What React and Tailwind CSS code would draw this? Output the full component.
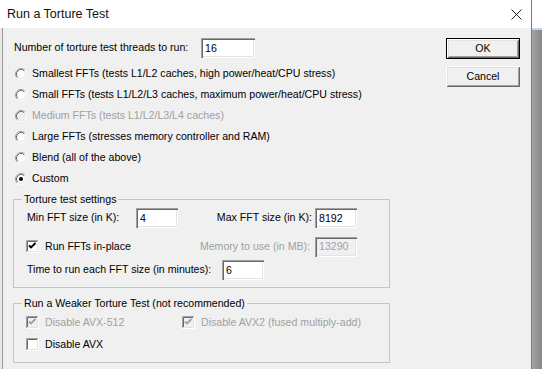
import React from 'react'

const sunken =
  'shadow-[inset_1px_1px_0_#a0a0a0,inset_2px_2px_0_#696969,inset_-1px_-1px_0_#ffffff,inset_-2px_-2px_0_#e3e3e3]'

function Radio({ checked, disabled }) {
  return (
    <svg width="12" height="12" viewBox="0 0 12 12" className="shrink-0">
      <circle cx="6" cy="6" r="5" fill={disabled ? '#f0f0f0' : '#ffffff'} />
      <path d="M2.11 9.89 A5.5 5.5 0 0 1 9.89 2.11" fill="none" stroke="#a0a0a0" />
      <path d="M9.89 2.11 A5.5 5.5 0 0 1 2.11 9.89" fill="none" stroke="#ffffff" />
      <path d="M2.82 9.18 A4.5 4.5 0 0 1 9.18 2.82" fill="none" stroke="#696969" />
      <path d="M9.18 2.82 A4.5 4.5 0 0 1 2.82 9.18" fill="none" stroke="#e3e3e3" />
      {checked && <circle cx="6" cy="6" r="2" fill="#000" />}
    </svg>
  )
}

function Check({ checked, disabled }) {
  return (
    <svg width="13" height="13" viewBox="0 0 13 13" className="shrink-0">
      <rect x="0" y="0" width="13" height="13" fill="#ffffff" />
      <rect x="2" y="2" width="9" height="9" fill={disabled ? '#f0f0f0' : '#ffffff'} />
      <path d="M0.5 12 V0.5 H12" fill="none" stroke="#a0a0a0" />
      <path d="M1.5 11 V1.5 H11" fill="none" stroke="#696969" />
      <path d="M1.5 11.5 H11.5 V1.5" fill="none" stroke="#e3e3e3" />
      {checked && (
        <path
          d="M3 5.5 L5 7.5 L9.5 3"
          fill="none"
          stroke={disabled ? '#a0a0a0' : '#000'}
          strokeWidth="1.9"
        />
      )}
    </svg>
  )
}

function Field({ value, width, disabled }) {
  return (
    <div
      className={`${width} h-[20px] shrink-0 pl-[4px] pt-[1px] flex items-center ${sunken} ${
        disabled ? 'bg-[#f0f0f0] text-[#a0a0a0]' : 'bg-white text-black'
      }`}
    >
      {value}
    </div>
  )
}

function RadioRow({ label, checked, disabled }) {
  return (
    <div className={`h-[21px] flex items-center pl-[2px] ${disabled ? 'text-[#a0a0a0]' : ''}`}>
      <Radio checked={checked} disabled={disabled} />
      <span className="ml-[5px]">{label}</span>
    </div>
  )
}

function CheckRow({ label, checked, disabled, className = '' }) {
  return (
    <div className={`flex items-center ${disabled ? 'text-[#a0a0a0]' : ''} ${className}`}>
      <Check checked={checked} disabled={disabled} />
      <span className="ml-[6px]">{label}</span>
    </div>
  )
}

function Button({ children, isDefault }) {
  return (
    <div
      className={`w-[74px] h-[21px] flex items-center justify-center bg-[#f0f0f0] ${
        isDefault
          ? 'border border-black shadow-[inset_1px_1px_0_#ffffff,inset_-1px_-1px_0_#696969,inset_2px_2px_0_#e3e3e3,inset_-2px_-2px_0_#a0a0a0]'
          : 'shadow-[inset_1px_1px_0_#ffffff,inset_-1px_-1px_0_#696969,inset_2px_2px_0_#e3e3e3,inset_-2px_-2px_0_#a0a0a0]'
      }`}
    >
      {children}
    </div>
  )
}

function Group({ title, children, className = '' }) {
  return (
    <fieldset className={`border border-[#c4c4c4] ${className}`}>
      <legend className="ml-[8px] px-[2px] leading-[13px]">{title}</legend>
      {children}
    </fieldset>
  )
}

export default function App() {
  return (
    <div className="w-[542px] h-[369px] flex bg-white overflow-hidden font-['Liberation_Sans',Arial,sans-serif] text-[10.6px] text-black">
      <div className="w-[532px] h-full flex flex-col border-r border-[#7c7c7c]">
        {/* title bar */}
        <div className="h-[28px] shrink-0 bg-white flex items-center pl-[7px] pr-[9px]">
          <span className="text-[12.5px] text-[#111]">Run a Torture Test</span>
          <svg width="11" height="11" viewBox="0 0 11 11" className="ml-auto">
            <path d="M0.5 0.5 L10.5 10.5 M10.5 0.5 L0.5 10.5" stroke="#222" strokeWidth="1" />
          </svg>
        </div>

        {/* body */}
        <div className="flex-1 flex bg-[#f0f0f0] pl-[13px] pt-[10px] shadow-[inset_2px_0_0_#e8e8e8,inset_3px_0_0_#9a9a9a]">
          <div className="w-[377px] flex flex-col">
            <div className="h-[20px] flex items-center pl-[1px]">
              <span className="w-[187px] shrink-0">Number of torture test threads to run:</span>
              <Field value="16" width="w-[54px]" />
            </div>

            <div className="mt-[5px]">
              <RadioRow label="Smallest FFTs (tests L1/L2 caches, high power/heat/CPU stress)" />
              <RadioRow label="Small FFTs (tests L1/L2/L3 caches, maximum power/heat/CPU stress)" />
              <RadioRow label="Medium FFTs (tests L1/L2/L3/L4 caches)" disabled />
              <RadioRow label="Large FFTs (stresses memory controller and RAM)" />
              <RadioRow label="Blend (all of the above)" />
              <RadioRow label="Custom" checked />
            </div>

            <Group title="Torture test settings" className="mt-[4px] pb-[7px]">
              <div className="mt-[2px] h-[20px] flex items-center pl-[13px] pr-[32px]">
                <span className="w-[109px] shrink-0">Min FFT size (in K):</span>
                <Field value="4" width="w-[42px]" />
                <span className="ml-auto mr-[3px]">Max FFT size (in K):</span>
                <Field value="8192" width="w-[42px]" />
              </div>
              <div className="mt-[9px] h-[19px] flex items-center pl-[12px] pr-[32px]">
                <CheckRow label="Run FFTs in-place" checked />
                <span className="ml-auto mr-[5px] text-[#a0a0a0]">Memory to use (in MB):</span>
                <Field value="13290" width="w-[42px]" disabled />
              </div>
              <div className="mt-[4px] h-[20px] flex items-center pl-[13px]">
                <span className="w-[195px] shrink-0">Time to run each FFT size (in minutes):</span>
                <Field value="6" width="w-[42px]" />
              </div>
            </Group>

            <Group title="Run a Weaker Torture Test (not recommended)" className="mt-[9px] pb-[7px]">
              <div className="mt-[3px] h-[20px] flex items-center pl-[12px]">
                <CheckRow label="Disable AVX-512" checked disabled className="w-[156px]" />
                <CheckRow label="Disable AVX2 (fused multiply-add)" checked disabled />
              </div>
              <div className="mt-[2px] h-[20px] flex items-center pl-[12px]">
                <CheckRow label="Disable AVX" />
              </div>
            </Group>
          </div>

          <div className="ml-[56px] flex flex-col gap-[7px]">
            <Button isDefault>OK</Button>
            <Button>Cancel</Button>
          </div>
        </div>
      </div>

      {/* background window strip */}
      <div className="flex-1 flex flex-col">
        <div className="h-[30px] bg-white border-b-2 border-[#c5d9ee]" />
        <div className="flex-1 bg-gradient-to-r from-[#a4a4a4] to-[#878787]" />
      </div>
    </div>
  )
}
